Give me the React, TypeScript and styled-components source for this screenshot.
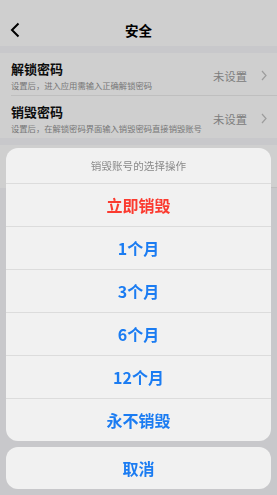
import React from "react";
import styled, { createGlobalStyle } from "styled-components";

const GlobalStyle = createGlobalStyle`
  html, body {
    margin: 0;
    padding: 0;
    background: #f7f7fa;
    font-family: "Noto Sans CJK SC", "Noto Sans", sans-serif;
  }
  * { box-sizing: border-box; }
`;

const Page = styled.div`
  width: 277px;
  height: 495px;
  overflow: hidden;
  background: #f7f7fa;
`;

const Header = styled.header`
  height: 46px;
  padding-top: 14px;
  background: #ffffff;
  display: grid;
  grid-template-columns: 40px 1fr 40px;
  align-items: center;
`;

const BackButton = styled.div`
  display: flex;
  align-items: center;
  padding-left: 10px;
`;

const Title = styled.h1`
  margin: 0;
  text-align: center;
  font-size: 13.5px;
  font-weight: 600;
  color: #000;
`;

const Section = styled.section`
  margin-top: 7px;
  background: #ffffff;
`;

const Row = styled.div<{ last?: boolean }>`
  height: ${({ last }) => (last ? "42px" : "43px")};
  margin-left: 11px;
  padding: 3px 10px 0 0;
  display: flex;
  align-items: center;
  border-bottom: ${({ last }) => (last ? "none" : "1px solid #ececec")};
`;

const RowText = styled.div`
  flex: 1;
  display: flex;
  flex-direction: column;
  gap: 3px;
`;

const RowTitle = styled.div`
  font-size: 13px;
  font-weight: 600;
  color: #111;
  line-height: 16px;
`;

const RowHint = styled.div`
  font-size: 8.3px;
  color: #929292;
  line-height: 10px;
  white-space: nowrap;
`;

const RowValue = styled.div`
  font-size: 11.3px;
  color: #9c9c9c;
  margin-right: 14px;
`;

const Overlay = styled.div`
  position: fixed;
  inset: 0;
  background: rgba(0, 0, 0, 0.19);
  display: flex;
  flex-direction: column;
  justify-content: flex-end;
  padding: 0 6px 6px;
  gap: 6px;
`;

const Sheet = styled.div`
  background: #f1f1f1;
  border-radius: 12px;
  overflow: hidden;
`;

const SheetTitle = styled.div`
  height: 36px;
  display: flex;
  align-items: center;
  justify-content: center;
  font-size: 10.6px;
  color: #8a8a8a;
  border-bottom: 1px solid #dcdcdc;
`;

const Action = styled.div<{ danger?: boolean; last?: boolean }>`
  height: ${({ last }) => (last ? "42px" : "43px")};
  display: flex;
  align-items: center;
  justify-content: center;
  font-size: 16px;
  font-weight: 600;
  color: ${({ danger }) => (danger ? "#fb3a2f" : "#1b7cf2")};
  border-bottom: ${({ last }) => (last ? "none" : "1px solid #dcdcdc")};
`;

const CancelSheet = styled(Sheet)`
  height: 42px;
  display: flex;
  align-items: center;
  justify-content: center;
  font-size: 16px;
  font-weight: 600;
  color: #1b7cf2;
`;

const Chevron = () => (
  <svg width="6" height="11" viewBox="0 0 6 11">
    <path d="M1 1l4 4.5L1 10" fill="none" stroke="#c2c2c2" strokeWidth="1.2" />
  </svg>
);

const settings = [
  { title: "解锁密码", hint: "设置后，进入应用需输入正确解锁密码" },
  { title: "销毁密码", hint: "设置后，在解锁密码界面输入销毁密码直接销毁账号" },
];

const actions = ["1个月", "3个月", "6个月", "12个月", "永不销毁"];

export default function App() {
  return (
    <>
      <GlobalStyle />
      <Page>
        <Header>
          <BackButton>
            <svg width="10" height="16" viewBox="0 0 10 16">
              <path d="M8.5 1.5L2 8l6.5 6.5" fill="none" stroke="#000" strokeWidth="2" />
            </svg>
          </BackButton>
          <Title>安全</Title>
          <div />
        </Header>
        <Section>
          {settings.map((s, i) => (
            <Row key={s.title} last={i === settings.length - 1}>
              <RowText>
                <RowTitle>{s.title}</RowTitle>
                <RowHint>{s.hint}</RowHint>
              </RowText>
              <RowValue>未设置</RowValue>
              <Chevron />
            </Row>
          ))}
        </Section>
        <Section>
          <Row>
            <RowText>
              <RowTitle>&nbsp;</RowTitle>
            </RowText>
          </Row>
        </Section>
      </Page>
      <Overlay>
        <Sheet>
          <SheetTitle>销毁账号的选择操作</SheetTitle>
          <Action danger>立即销毁</Action>
          {actions.map((a, i) => (
            <Action key={a} last={i === actions.length - 1}>
              {a}
            </Action>
          ))}
        </Sheet>
        <CancelSheet>取消</CancelSheet>
      </Overlay>
    </>
  );
}
